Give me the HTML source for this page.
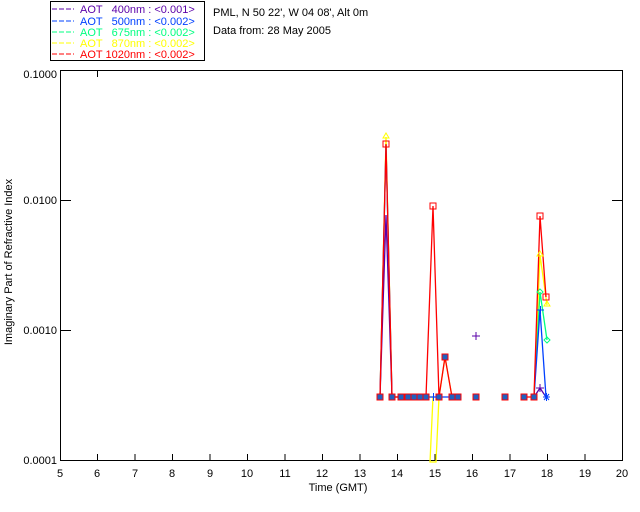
<!DOCTYPE html>
<html><head><style>
body{margin:0;background:#fff;width:640px;height:512px;overflow:hidden}
svg{display:block}
text{font-family:"Liberation Sans",sans-serif;font-size:11px;white-space:pre}
</style></head><body>
<svg width="640" height="512" viewBox="0 0 640 512" xml:space="preserve">
<rect x="0" y="0" width="640" height="512" fill="#fff"/>
<rect x="50.5" y="1.5" width="154" height="59" fill="none" stroke="#000"/>
<g font-size="11">
<line x1="52" y1="9" x2="74" y2="9" stroke="#5a00a8" stroke-dasharray="5,2"/>
<text x="80" y="13" fill="#5a00a8">AOT   400nm : &lt;0.001&gt;</text>
<line x1="52" y1="21" x2="74" y2="21" stroke="#0040ff" stroke-dasharray="5,2"/>
<text x="80" y="25" fill="#0040ff">AOT   500nm : &lt;0.002&gt;</text>
<line x1="52" y1="32" x2="74" y2="32" stroke="#00ff80" stroke-dasharray="5,2"/>
<text x="80" y="36" fill="#00ff80">AOT   675nm : &lt;0.002&gt;</text>
<line x1="52" y1="43" x2="74" y2="43" stroke="#ffff00" stroke-dasharray="5,2"/>
<text x="80" y="47" fill="#ffff00">AOT   870nm : &lt;0.002&gt;</text>
<line x1="52" y1="54" x2="74" y2="54" stroke="#ff0000" stroke-dasharray="5,2"/>
<text x="80" y="58" fill="#ff0000">AOT 1020nm : &lt;0.002&gt;</text>
</g>
<text x="213" y="16">PML, N 50 22', W 04 08', Alt 0m</text>
<text x="213" y="34">Data from: 28 May 2005</text>
<rect x="60.5" y="70.5" width="562" height="390" fill="none" stroke="#000"/>
<g stroke="#000">
<line x1="97.5" y1="461" x2="97.5" y2="454"/><line x1="135" y1="461" x2="135" y2="454"/><line x1="172.5" y1="461" x2="172.5" y2="454"/><line x1="210" y1="461" x2="210" y2="454"/><line x1="247.5" y1="461" x2="247.5" y2="454"/><line x1="285" y1="461" x2="285" y2="454"/><line x1="322.5" y1="461" x2="322.5" y2="454"/><line x1="360" y1="461" x2="360" y2="454"/><line x1="397.5" y1="461" x2="397.5" y2="454"/><line x1="435" y1="461" x2="435" y2="454"/><line x1="472.5" y1="461" x2="472.5" y2="454"/><line x1="510" y1="461" x2="510" y2="454"/><line x1="547.5" y1="461" x2="547.5" y2="454"/><line x1="585" y1="461" x2="585" y2="454"/>
<line x1="97.5" y1="70" x2="97.5" y2="77"/>
<line x1="60" y1="200.5" x2="71" y2="200.5"/><line x1="60" y1="330.5" x2="71" y2="330.5"/>
<line x1="612" y1="200.5" x2="622" y2="200.5"/><line x1="612" y1="330.5" x2="622" y2="330.5"/>
</g>
<g font-size="11" text-anchor="middle">
<text x="60" y="477">5</text><text x="97" y="477">6</text><text x="135" y="477">7</text><text x="172" y="477">8</text><text x="210" y="477">9</text><text x="247" y="477">10</text><text x="285" y="477">11</text><text x="322" y="477">12</text><text x="360" y="477">13</text><text x="397" y="477">14</text><text x="435" y="477">15</text><text x="472" y="477">16</text><text x="510" y="477">17</text><text x="547" y="477">18</text><text x="585" y="477">19</text><text x="622" y="477">20</text>
<text x="338" y="491">Time (GMT)</text>
</g>
<g font-size="11" text-anchor="end">
<text x="57" y="78">0.1000</text><text x="57" y="204">0.0100</text><text x="57" y="334">0.0010</text><text x="57" y="464">0.0001</text>
</g>
<text x="0" y="0" font-size="10" text-anchor="middle" transform="translate(12,262) rotate(-90)">Imaginary Part of Refractive Index</text>
<g fill="none" stroke-width="1.3">
<polyline stroke="#ffff00" points="380,397 386,137 392,397 433,397 430,462 436,462 439,397 445,357 452,397 458,397"/>
<polyline stroke="#ffff00" points="534,397 540,255 547,305"/>
<polyline stroke="#00ff80" points="534,397 540,292 547,340"/>
<polyline stroke="#0040ff" points="380,397 386,145 392,397 458,397"/>
<polyline stroke="#0040ff" points="534,397 540,310 546,397"/>
<polyline stroke="#5a00a8" points="380,397 386,215 392,397"/>
<polyline stroke="#5a00a8" points="534,397 540,388 546,397"/>
<polyline stroke="#ff0000" points="380,397 386,144 392,397 426,397 433,206 439,397 445,357 452,397 458,397"/>
<polyline stroke="#ff0000" points="524,397 534,397 540,216 546,297"/>
</g>
<g stroke="#ff0000" fill="#2060c0" stroke-width="1">
<rect x="377" y="394" width="6" height="6"/><rect x="389" y="394" width="6" height="6"/><rect x="398" y="394" width="6" height="6"/><rect x="405" y="394" width="6" height="6"/><rect x="411" y="394" width="6" height="6"/><rect x="417" y="394" width="6" height="6"/><rect x="423" y="394" width="6" height="6"/><rect x="436" y="394" width="6" height="6"/><rect x="449" y="394" width="6" height="6"/><rect x="455" y="394" width="6" height="6"/><rect x="473" y="394" width="6" height="6"/><rect x="502" y="394" width="6" height="6"/><rect x="521" y="394" width="6" height="6"/><rect x="531" y="394" width="6" height="6"/><rect x="442" y="354" width="6" height="6"/>
</g>
<g stroke="#ff0000" fill="none">
<rect x="383" y="141" width="6" height="6"/><rect x="430" y="203" width="6" height="6"/><rect x="537" y="213" width="6" height="6"/><rect x="543" y="294" width="6" height="6"/>
</g>
<g stroke="#ffff00" fill="none"><path d="M386,133 l3,5 h-6z"/><path d="M540,251 l3,5 h-6z"/><path d="M547,301 l3,5 h-6z"/></g>
<g stroke="#00ff80" fill="none"><path d="M547,337 l3,3 -3,3 -3,-3z"/><path d="M540,289 l3,3 -3,3 -3,-3z"/></g>
<g stroke="#0040ff"><path d="M543,397 h7 M546.5,393 v8 M544,394 l5,6 M549,394 l-5,6"/><path d="M537,310 h7 M540.5,306 v8"/><path d="M430,397 h7 M433.5,393 v8"/></g>
<g stroke="#5a00a8"><path d="M472,336 h8 M476,332 v8"/><path d="M536,388 h8 M540,384 v8"/></g>
</svg>
</body></html>
